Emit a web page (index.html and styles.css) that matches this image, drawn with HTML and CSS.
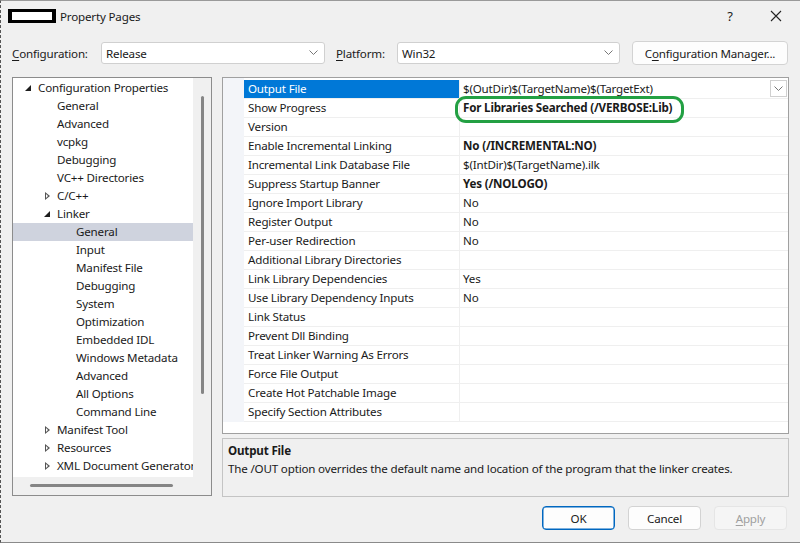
FILE: index.html
```html
<!DOCTYPE html>
<html>
<head>
<meta charset="utf-8">
<link rel="stylesheet" href="styles.css">
</head>
<body>
<div class="window">
  <div class="titlebar">
    <div class="appicon"><div class="appicon-in"></div></div>
    <div class="title">Property Pages</div>
    <div class="tb-spacer"></div>
    <div class="tb-btn help">?</div>
    <div class="tb-btn close">
      <svg width="12" height="12" viewBox="0 0 12 12"><path d="M1 1 L11 11 M11 1 L1 11" stroke="#222" stroke-width="1.1" fill="none"/></svg>
    </div>
  </div>

  <div class="configbar">
    <label class="lbl lbl-config"><u>C</u>onfiguration:</label>
    <div class="combo combo-config">
      <span>Release</span>
      <svg class="chev" width="9" height="6" viewBox="0 0 9 6"><path d="M0.5 0.5 L4.5 4.5 L8.5 0.5" stroke="#777" fill="none"/></svg>
    </div>
    <label class="lbl lbl-plat"><u>P</u>latform:</label>
    <div class="combo combo-plat">
      <span>Win32</span>
      <svg class="chev" width="9" height="6" viewBox="0 0 9 6"><path d="M0.5 0.5 L4.5 4.5 L8.5 0.5" stroke="#777" fill="none"/></svg>
    </div>
    <div class="btn cfgmgr">C<u>o</u>nfiguration Manager...</div>
  </div>

  <div class="main">
    <div class="tree">
      <div class="tree-body">
        <div class="node l0"><span class="tri open"></span>Configuration Properties</div>
        <div class="node l1"><span class="tri none"></span>General</div>
        <div class="node l1"><span class="tri none"></span>Advanced</div>
        <div class="node l1"><span class="tri none"></span>vcpkg</div>
        <div class="node l1"><span class="tri none"></span>Debugging</div>
        <div class="node l1"><span class="tri none"></span>VC++ Directories</div>
        <div class="node l1"><span class="tri closed"></span>C/C++</div>
        <div class="node l1"><span class="tri open"></span>Linker</div>
        <div class="node l2 sel"><span class="tri none"></span>General</div>
        <div class="node l2"><span class="tri none"></span>Input</div>
        <div class="node l2"><span class="tri none"></span>Manifest File</div>
        <div class="node l2"><span class="tri none"></span>Debugging</div>
        <div class="node l2"><span class="tri none"></span>System</div>
        <div class="node l2"><span class="tri none"></span>Optimization</div>
        <div class="node l2"><span class="tri none"></span>Embedded IDL</div>
        <div class="node l2"><span class="tri none"></span>Windows Metadata</div>
        <div class="node l2"><span class="tri none"></span>Advanced</div>
        <div class="node l2"><span class="tri none"></span>All Options</div>
        <div class="node l2"><span class="tri none"></span>Command Line</div>
        <div class="node l1"><span class="tri closed"></span>Manifest Tool</div>
        <div class="node l1"><span class="tri closed"></span>Resources</div>
        <div class="node l1"><span class="tri closed"></span>XML Document Generator</div>
      </div>
      <div class="vscroll"><div class="vthumb"></div></div>
      <div class="hscroll"><div class="hthumb"></div></div>
      <div class="corner"></div>
    </div>

    <div class="right">
      <div class="grid">
        <div class="gutter"></div>
        <div class="props">
          <div class="row sel"><div class="name">Output File</div><div class="val">$(OutDir)$(TargetName)$(TargetExt)<span class="ddbtn"><svg width="9" height="6" viewBox="0 0 9 6"><path d="M0.5 0.5 L4.5 4.5 L8.5 0.5" stroke="#777" fill="none"/></svg></span></div></div>
          <div class="row"><div class="name">Show Progress</div><div class="val b">For Libraries Searched (/VERBOSE:Lib)</div></div>
          <div class="row"><div class="name">Version</div><div class="val"></div></div>
          <div class="row"><div class="name">Enable Incremental Linking</div><div class="val b">No (/INCREMENTAL:NO)</div></div>
          <div class="row"><div class="name">Incremental Link Database File</div><div class="val">$(IntDir)$(TargetName).ilk</div></div>
          <div class="row"><div class="name">Suppress Startup Banner</div><div class="val b">Yes (/NOLOGO)</div></div>
          <div class="row"><div class="name">Ignore Import Library</div><div class="val">No</div></div>
          <div class="row"><div class="name">Register Output</div><div class="val">No</div></div>
          <div class="row"><div class="name">Per-user Redirection</div><div class="val">No</div></div>
          <div class="row"><div class="name">Additional Library Directories</div><div class="val"></div></div>
          <div class="row"><div class="name">Link Library Dependencies</div><div class="val">Yes</div></div>
          <div class="row"><div class="name">Use Library Dependency Inputs</div><div class="val">No</div></div>
          <div class="row"><div class="name">Link Status</div><div class="val"></div></div>
          <div class="row"><div class="name">Prevent Dll Binding</div><div class="val"></div></div>
          <div class="row"><div class="name">Treat Linker Warning As Errors</div><div class="val"></div></div>
          <div class="row"><div class="name">Force File Output</div><div class="val"></div></div>
          <div class="row"><div class="name">Create Hot Patchable Image</div><div class="val"></div></div>
          <div class="row"><div class="name">Specify Section Attributes</div><div class="val"></div></div>
        </div>
        <div class="mark"></div>
      </div>
      <div class="desc">
        <div class="desc-title">Output File</div>
        <div class="desc-text">The /OUT option overrides the default name and location of the program that the linker creates.</div>
      </div>
    </div>
  </div>

  <div class="footer">
    <div class="btn ok">OK</div>
    <div class="btn cancel">Cancel</div>
    <div class="btn apply"><u>A</u>pply</div>
  </div>
</div>
</body>
</html>
```

FILE: styles.css
```css
* { box-sizing: border-box; }
html, body { margin: 0; padding: 0; }
body {
  width: 800px;
  height: 543px;
  overflow: hidden;
  font-family: "Segoe UI", "Noto Sans", sans-serif;
  font-size: 11.6px;
  letter-spacing: -0.18px;
  color: #1a1a1a;
  background: #f0f0f0;
}
u { text-decoration: underline; text-underline-offset: 2px; }

.window {
  width: 800px;
  height: 543px;
  background: #f0f0f0;
  border-left: 1px dashed #555;
  border-top: 1px solid #9a9a9a;
  border-bottom: 1px solid #8a8a8a;
  display: flex;
  flex-direction: column;
}

.titlebar {
  height: 30px;
  display: flex;
  align-items: center;
  padding-left: 7px;
}
.appicon {
  width: 48px;
  height: 14px;
  background: #000;
  padding: 3px 4px;
}
.appicon-in { width: 100%; height: 100%; background: #fff; }
.title { margin-left: 4px; color: #1a1a1a; }
.tb-spacer { flex: 1; }
.tb-btn { display: flex; align-items: center; justify-content: center; height: 30px; }
.help { width: 30px; font-size: 13px; margin-right: 16px; }
.close { width: 30px; margin-right: 9px; }

.configbar {
  margin-top: 10px;
  height: 24px;
  display: flex;
  align-items: center;
  padding-left: 11px;
}
.lbl-config { width: 89px; }
.lbl-plat { width: 61px; margin-left: 11px; }
.combo {
  height: 22px;
  background: #fff;
  border: 1px solid #d0d0d0;
  border-radius: 3px;
  display: flex;
  align-items: center;
  padding-left: 4px;
  padding-right: 6px;
}
.combo span { flex: 1; }
.combo-config { width: 224px; }
.combo-plat { width: 223px; }
.btn {
  height: 24px;
  border: 1px solid #d3d3d3;
  border-radius: 4px;
  background: #fdfdfd;
  display: flex;
  align-items: center;
  justify-content: center;
}
.cfgmgr { width: 156px; margin-left: 12px; }

.main {
  margin-top: 12px;
  height: 420px;
  display: flex;
  padding-left: 11px;
}

.tree {
  width: 200px;
  height: 419px;
  border: 1px solid #8c8c8c;
  display: grid;
  grid-template-columns: 1fr 18px;
  grid-template-rows: 1fr 18px;
  background: #f0f0f0;
}
.tree-body {
  background: #fff;
  padding-top: 1px;
  overflow: hidden;
  white-space: nowrap;
}
.node {
  height: 18px;
  line-height: 18px;
  display: flex;
  align-items: center;
}
.node.sel { background: #cfd3de; }
.l0 { padding-left: 8px; }
.l1 { padding-left: 27px; }
.l2 { padding-left: 46px; }
.tri { width: 17px; height: 18px; position: relative; flex: none; }
.tri.open::before {
  content: "";
  position: absolute;
  left: 4px; top: 6px;
  width: 0; height: 0;
  border-left: 6px solid transparent;
  border-bottom: 6px solid #1e1e1e;
}
.tri.closed::before {
  content: "";
  position: absolute;
  left: 5px; top: 5px;
  width: 0; height: 0;
  border-top: 4px solid transparent;
  border-bottom: 4px solid transparent;
  border-left: 5px solid #555;
}
.tri.closed::after {
  content: "";
  position: absolute;
  left: 6px; top: 7px;
  width: 0; height: 0;
  border-top: 2px solid transparent;
  border-bottom: 2px solid transparent;
  border-left: 2.5px solid #fff;
}
.vscroll { display: flex; justify-content: center; padding-top: 18px; }
.vthumb { width: 3px; height: 298px; background: #858585; border-radius: 2px; margin-left: 1px; }
.hscroll { padding-left: 17px; padding-top: 7px; }
.hthumb { width: 143px; height: 3px; background: #858585; border-radius: 2px; }

.right {
  margin-left: 10px;
  width: 567px;
  display: flex;
  flex-direction: column;
}
.grid {
  position: relative;
  height: 357px;
  margin-top: 0;
  border: 1px solid #a0a0a0;
  background: #fff;
  display: flex;
  align-items: flex-start;
}
.gutter { width: 21px; height: 344px; background: #f3f5f9; flex: none; }
.props { flex: 1; padding-top: 2px; }
.row {
  height: 19px;
  display: flex;
  border-bottom: 1px solid #efefef;
}
.name {
  width: 216px;
  padding-left: 4px;
  line-height: 18px;
  border-right: 1px solid #efefef;
  flex: none;
}
.val {
  flex: 1;
  padding-left: 3px;
  line-height: 18px;
  display: flex;
  white-space: nowrap;
}
.val.b { font-weight: bold; }
.row.sel .name { background: #0078d7; color: #fff; }
.ddbtn {
  margin-left: auto;
  margin-right: 1px;
  width: 17px;
  height: 17px;
  border: 1px solid #d0d0d0;
  display: flex;
  align-items: center;
  justify-content: center;
  background: #fff;
}
.mark {
  position: absolute;
  left: 232px;
  top: 18px;
  width: 229px;
  height: 27px;
  border: 3px solid #23a043;
  border-radius: 11px;
  pointer-events: none;
}

.desc {
  margin-top: 4px;
  height: 59px;
  border: 1px solid #c4c4c4;
  background: #f0f0f0;
  padding: 3px 5px;
}
.desc-title { font-weight: bold; line-height: 18px; }
.desc-text { line-height: 18px; }

.footer {
  display: flex;
  justify-content: flex-end;
  padding-top: 9px;
  padding-right: 13px;
  gap: 13px;
}
.footer .btn { width: 73px; height: 24px; }
.ok { border-color: #0067c0; box-shadow: inset 0 0 0 0.5px #0067c0; }
.apply { background: #f5f5f5; color: #a0a0a0; border-color: #e5e5e5; }
```
